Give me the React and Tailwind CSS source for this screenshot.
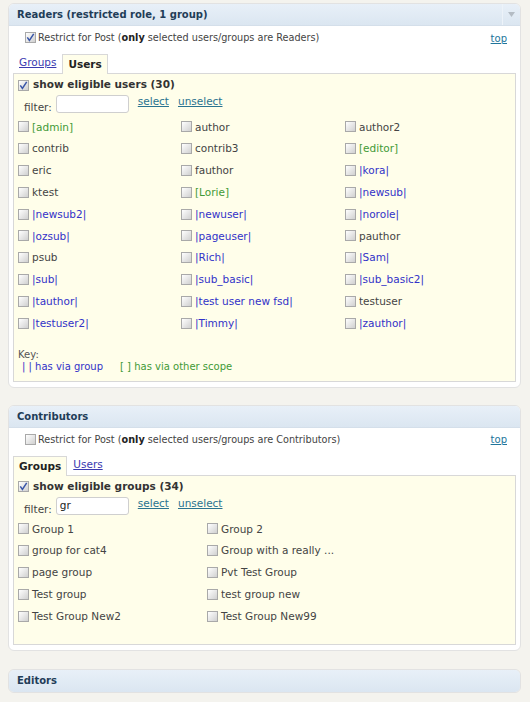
import React from "react";

const FONT = "font-['DejaVu_Sans',Verdana,sans-serif]";

const Check = ({ checked }) => (
  <span className="relative inline-block w-[11px] h-[11px] shrink-0 border border-[#a9a9a9] bg-linear-to-br from-[#ffffff] to-[#d0d0d0]">
    {checked && (
      <svg viewBox="0 0 11 11" className="absolute -left-px -top-px w-[11px] h-[11px]">
        <path d="M2.3 5.4 L4.4 8.4 L8.7 1.8" stroke="#3a56a8" strokeWidth="1.5" fill="none" />
      </svg>
    )}
  </span>
);

const Item = ({ label, tone }) => {
  const color =
    tone === "g" ? "text-[#3f9a36]" : tone === "b" ? "text-[#3232c8]" : "text-[#444]";
  return (
    <div className="flex items-center h-[21.8px]">
      <Check />
      <span className={`ml-[3px] text-[10.5px] leading-none ${color}`}>{label}</span>
    </div>
  );
};

const Header = ({ title, arrow }) => (
  <div className="flex items-stretch h-[22px] bg-linear-to-b from-[#e8f0f8] to-[#dbe6f1] border-b border-[#d4dfea] rounded-t-[5px]">
    <div className="flex-1 flex items-center pl-[8px] text-[10px] font-bold text-[#1f3d58]">
      {title}
    </div>
    {arrow && (
      <div className="w-[18px] flex items-center justify-center border-l border-[#edf3f9]">
        <svg width="7" height="5" viewBox="0 0 7 5">
          <path d="M0 0 L7 0 L3.5 5 Z" fill="#b4bcc4" />
        </svg>
      </div>
    )}
  </div>
);

const Tabs = ({ active }) => {
  const tab = (name) =>
    name === active ? (
      <div className="h-[20px] px-[5px] -mb-px flex items-center border border-b-0 border-[#d8d8d8] bg-[#fffeea] text-[10.5px] font-bold text-[#222] relative">
        {name}
      </div>
    ) : (
      <div className="h-[20px] px-[6px] flex items-center text-[10.5px] text-[#3a3ab0] underline">
        {name}
      </div>
    );
  return (
    <div className="flex items-end h-[20px] mt-[3px]">
      {tab("Groups")}
      {tab("Users")}
    </div>
  );
};

const Restrict = ({ checked, role }) => (
  <div className="flex items-center justify-between h-[24px] pl-[12px] pr-[9px]">
    <div className="flex items-center">
      <Check checked={checked} />
      <span className="ml-[2px] text-[9.7px] text-[#444]">
        Restrict for Post (<b className="text-[#222]">only</b> selected users/groups are {role})
      </span>
    </div>
    <span className="text-[10px] text-[#21759b] underline">top</span>
  </div>
);

const Filter = ({ value }) => (
  <div className="flex items-start mt-[4px] h-[18px]">
    <span className="ml-[10px] mt-[7px] text-[10.5px] leading-[11px] text-[#444]">filter:</span>
    <div className="ml-[4px] w-[73px] h-[18px] bg-white border border-[#cfcfcf] rounded-[3px] flex items-center pl-[3px] text-[10.5px] text-[#222]">
      {value}
    </div>
    <span className="ml-[9px] mt-[1px] text-[10.5px] leading-[11px] text-[#2a7390] underline">select</span>
    <span className="ml-[9px] mt-[1px] text-[10.5px] leading-[11px] text-[#2a7390] underline">unselect</span>
  </div>
);

const ShowRow = ({ label }) => (
  <div className="flex items-center h-[12px] pl-[4px]">
    <Check checked />
    <span className="ml-[4px] text-[10.5px] font-bold text-[#333]">{label}</span>
  </div>
);

const users = [
  ["[admin]", "g"], ["author"], ["author2"],
  ["contrib"], ["contrib3"], ["[editor]", "g"],
  ["eric"], ["fauthor"], ["|kora|", "b"],
  ["ktest"], ["[Lorie]", "g"], ["|newsub|", "b"],
  ["|newsub2|", "b"], ["|newuser|", "b"], ["|norole|", "b"],
  ["|ozsub|", "b"], ["|pageuser|", "b"], ["pauthor"],
  ["psub"], ["|Rich|", "b"], ["|Sam|", "b"],
  ["|sub|", "b"], ["|sub_basic|", "b"], ["|sub_basic2|", "b"],
  ["|tauthor|", "b"], ["|test user new fsd|", "b"], ["testuser"],
  ["|testuser2|", "b"], ["|Timmy|", "b"], ["|zauthor|", "b"],
];

const groups = [
  "Group 1", "Group 2",
  "group for cat4", "Group with a really ...",
  "page group", "Pvt Test Group",
  "Test group", "test group new",
  "Test Group New2", "Test Group New99",
];

export default function App() {
  return (
    <div className={`${FONT} w-[530px] h-[702px] bg-[#f4f3ee] pt-[3px] overflow-hidden`}>
      {/* Readers */}
      <div className="ml-[8px] w-[513px] bg-white border border-[#e2e2e2] rounded-[6px]">
        <Header title="Readers (restricted role, 1 group)" arrow />
        <div className="px-[4px] pb-[5px]">
          <Restrict checked role="Readers" />
          <Tabs active="Users" />
          <div className="border border-[#d8d8d8] bg-[#fffeea] pt-[5px] pb-[8px]">
            <ShowRow label="show eligible users (30)" />
            <Filter value="" />
            <div className="grid grid-cols-[163px_164px_1fr] pl-[4px] mt-[3px]">
              {users.map(([l, t], i) => (
                <Item key={i} label={l} tone={t} />
              ))}
            </div>
            <div className="mt-[15px] pl-[4px] text-[10px] leading-[12px]">
              <div className="text-[#555]">Key:</div>
              <div className="flex">
                <span className="ml-[4px] w-[98px] text-[#3232c8]">| | has via group</span>
                <span className="text-[#3f9a36]">[ ] has via other scope</span>
              </div>
            </div>
          </div>
        </div>
      </div>

      {/* Contributors */}
      <div className="ml-[8px] mt-[17px] w-[513px] bg-white border border-[#e2e2e2] rounded-[6px]">
        <Header title="Contributors" />
        <div className="px-[4px] pb-[5px]">
          <Restrict role="Contributors" />
          <Tabs active="Groups" />
          <div className="border border-[#d8d8d8] bg-[#fffeea] pt-[5px] pb-[17px]">
            <ShowRow label="show eligible groups (34)" />
            <Filter value="gr" />
            <div className="grid grid-cols-[189px_1fr] pl-[4px] mt-[3px]">
              {groups.map((g, i) => (
                <Item key={i} label={g} />
              ))}
            </div>
          </div>
        </div>
      </div>

      {/* Editors */}
      <div className="ml-[8px] mt-[18px] w-[513px] border border-[#e2e2e2] rounded-[6px] overflow-hidden">
        <div className="flex items-center h-[22px] bg-linear-to-b from-[#e8f0f8] to-[#dbe6f1] pl-[8px] text-[10px] font-bold text-[#1f3d58]">
          Editors
        </div>
      </div>
    </div>
  );
}
